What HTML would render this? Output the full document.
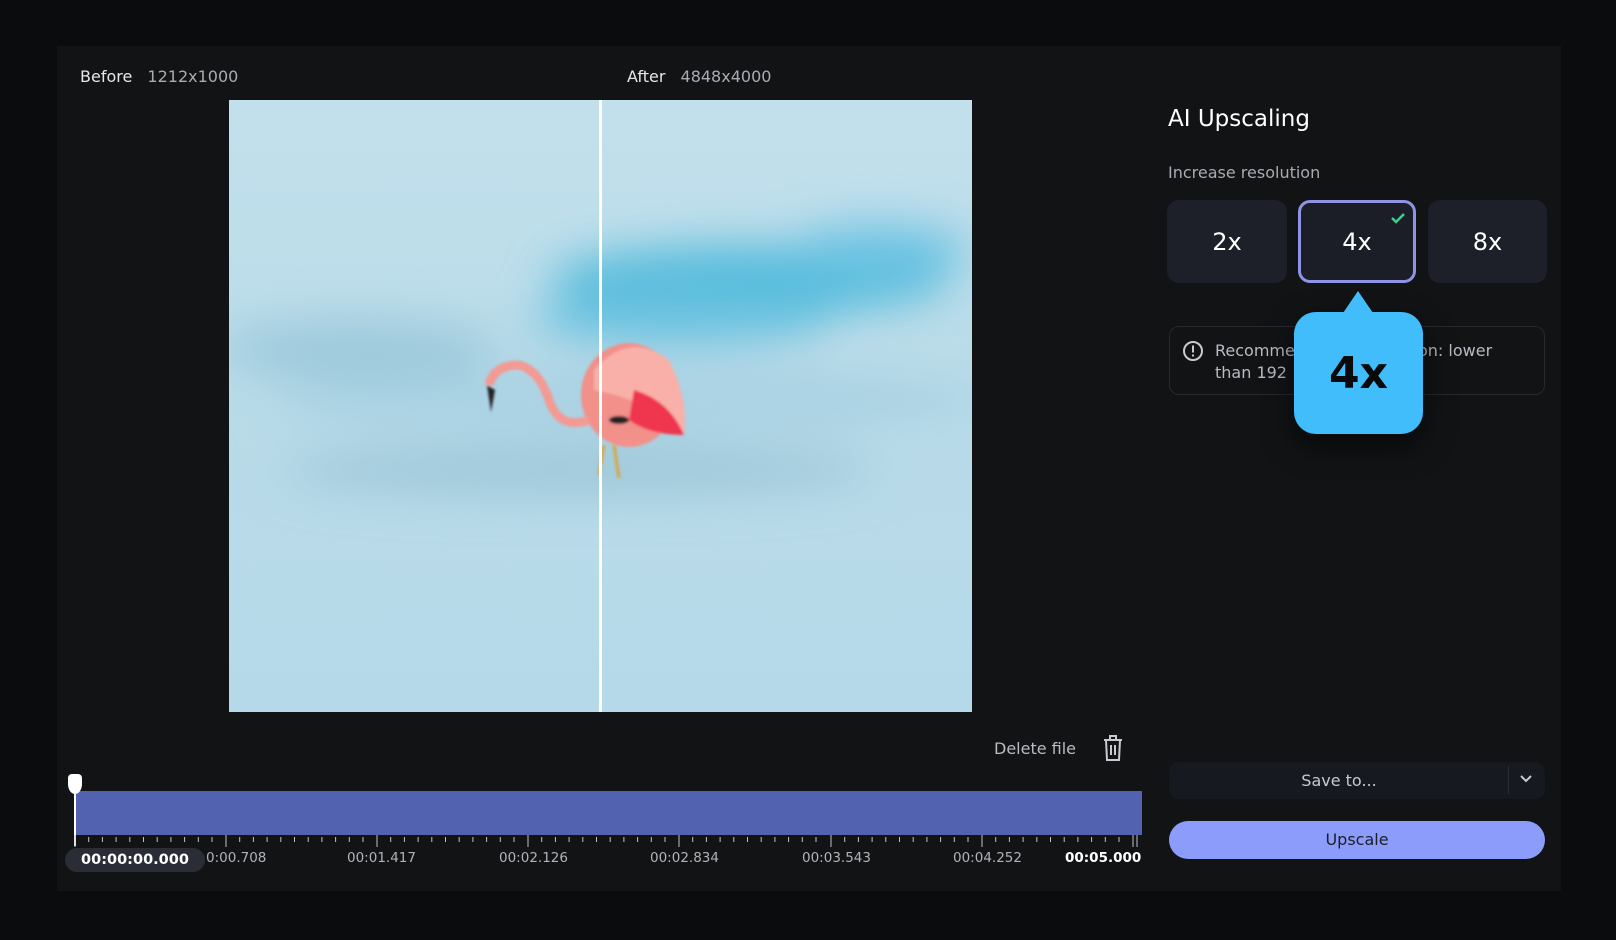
<!DOCTYPE html>
<html><head><meta charset="utf-8"><style>
*{margin:0;padding:0;box-sizing:border-box}
body{width:1616px;height:940px;background:#0b0c0e;font-family:"DejaVu Sans","Liberation Sans",sans-serif;position:relative;overflow:hidden;color:#d8dadf}
.panel{position:absolute;left:57px;top:46px;width:1504px;height:845px;background:#111315}
.a{position:absolute;white-space:nowrap}
.btn{position:absolute;top:200px;height:83px;width:120px;background:#1d2029;border-radius:12px;color:#fff;font-size:24px;display:flex;align-items:center;justify-content:center}
.lbl{position:absolute;top:850px;font-size:13.5px;color:#b0b3ba}
</style></head><body>
<div class="panel"></div>
<div class="a" style="left:80px;top:67px;font-size:16px;color:#e6e7ea">Before <span style="color:#a9acb3;margin-left:10px">1212x1000</span></div>
<div class="a" style="left:627px;top:67px;font-size:16px;color:#e6e7ea">After <span style="color:#a9acb3;margin-left:10px">4848x4000</span></div>

<svg class="a" style="left:229px;top:100px" width="743" height="612" viewBox="0 0 743 612">
<defs>
<filter id="b1" x="-50%" y="-50%" width="200%" height="200%"><feGaussianBlur stdDeviation="22"/></filter>
<filter id="b2"><feGaussianBlur stdDeviation="1.2"/></filter>
<linearGradient id="bg" x1="0" y1="0" x2="0" y2="1"><stop offset="0" stop-color="#c2e0ec"/><stop offset="0.5" stop-color="#b9dbe8"/><stop offset="1" stop-color="#b6d9ea"/></linearGradient>
</defs>
<rect width="743" height="612" fill="url(#bg)"/>
<g filter="url(#b1)">
<ellipse cx="520" cy="180" rx="200" ry="35" fill="#55bcdc"/>
<ellipse cx="450" cy="220" rx="150" ry="25" fill="#6ac2e0"/>
<ellipse cx="650" cy="150" rx="90" ry="25" fill="#6cc3e3" />
<ellipse cx="130" cy="250" rx="140" ry="30" fill="#9cc9dc"/>
<ellipse cx="400" cy="300" rx="360" ry="30" fill="#a9d2e3"/>
<ellipse cx="350" cy="370" rx="300" ry="25" fill="#9ec8d9"/>
</g>
<g filter="url(#b2)">
<ellipse cx="400" cy="295" rx="48" ry="52" fill="#f2908a"/>
<path d="M365 270 Q400 230 440 260 Q460 300 455 335 Q420 300 365 290Z" fill="#f8b0a8"/>
<path d="M405 290 Q440 300 455 335 Q420 335 400 320Z" fill="#f0344f"/>
<path d="M360 320 Q330 330 320 300 Q310 270 290 265 Q265 265 260 285" fill="none" stroke="#f39a94" stroke-width="9"/>
<path d="M258 285 L262 312 L266 290Z" fill="#222"/>
<path d="M375 345 L370 375 M385 345 L390 378" stroke="#d9a640" stroke-width="3"/>
<ellipse cx="390" cy="320" rx="10" ry="4" fill="#222"/>
</g>
<rect x="370" y="0" width="3" height="612" fill="#fff"/>
</svg>

<div class="a" style="left:1168px;top:106px;font-size:23px;color:#fff">AI Upscaling</div>
<div class="a" style="left:1168px;top:163px;font-size:16px;color:#a8abb3">Increase resolution</div>
<div class="btn" style="left:1167px">2x</div>
<div class="btn" style="left:1298px;width:118px;border:3px solid #8e93e6;background:#1b1e27">4x</div>
<svg class="a" style="left:1390px;top:212px" width="16" height="12"><path d="M2 6 L6 10 L14 2" stroke="#3ccf8e" stroke-width="2.5" fill="none"/></svg>
<div class="btn" style="left:1428px;width:119px">8x</div>

<div class="a" style="left:1169px;top:326px;width:376px;height:69px;border:1px solid #262930;border-radius:10px"></div>
<svg class="a" style="left:1182px;top:340px" width="22" height="22"><circle cx="11" cy="11" r="9" fill="none" stroke="#c8cad0" stroke-width="2"/><rect x="10" y="5.5" width="2" height="7" fill="#c8cad0"/><rect x="10" y="14.5" width="2" height="2" fill="#c8cad0"/></svg>
<div class="a" style="left:1215px;top:340px;font-size:16px;color:#b8bbc2;line-height:22px">Recomme<br>than 192</div>
<div class="a" style="left:1418px;top:340px;font-size:16px;color:#b8bbc2;line-height:22px">on: lower</div>

<div class="a" style="left:1294px;top:312px;width:129px;height:122px;background:#42bdfb;border-radius:22px;box-shadow:0 12px 30px rgba(0,0,0,.6);display:flex;align-items:center;justify-content:center;font-size:44px;font-weight:bold;color:#0a0a0a">4x</div>
<div class="a" style="left:1343px;top:291px;width:0;height:0;border-left:15px solid transparent;border-right:15px solid transparent;border-bottom:22px solid #42bdfb"></div>

<div class="a" style="left:994px;top:739px;font-size:16px;color:#b8bbc2">Delete file</div>
<svg class="a" style="left:1101px;top:733px" width="24" height="30"><path d="M3 7 H21 M9 7 V3 H15 V7 M5 7 L6 27 H18 L19 7 M10 12 V22 M14 12 V22" stroke="#c8cad0" stroke-width="2" fill="none"/></svg>

<div class="a" style="left:1169px;top:762px;width:376px;height:37px;background:#161920;border-radius:10px"></div>
<div class="a" style="left:1169px;top:771px;width:340px;text-align:center;font-size:16px;color:#c8cad0">Save to...</div>
<div class="a" style="left:1508px;top:766px;width:1px;height:28px;background:#2b2e36"></div>
<svg class="a" style="left:1519px;top:774px" width="14" height="10"><path d="M2 2 L7 7 L12 2" stroke="#c8cad0" stroke-width="2" fill="none"/></svg>
<div class="a" style="left:1169px;top:821px;width:376px;height:38px;background:#8c9cfa;border-radius:19px;text-align:center;line-height:38px;font-size:16px;color:#1a1d2a">Upscale</div>

<div class="a" style="left:74px;top:791px;width:1068px;height:44px;background:#5262b0"></div>
<div class="a" style="left:74px;top:776px;width:2px;height:70px;background:#fff"></div>
<div class="a" style="left:68px;top:774px;width:14px;height:20px;background:#fff;border-radius:4px 4px 50% 50%"></div>
<svg class="a" style="left:70px;top:835px" width="1080" height="12">
<g stroke="#c0c3ca" stroke-width="1">
<path d="M5 0 V12 M156 0 V12 M307 0 V12 M458 0 V12 M609 0 V12 M761 0 V12 M912 0 V12 M1063 0 V12 M1067 0 V12"/>
<g id="m"><path d="M18.7 2 V7 M32.4 2 V7 M46.1 2 V7 M59.8 2 V7 M73.5 2 V7 M87.2 2 V7 M100.9 2 V7 M114.6 2 V7 M128.3 2 V7 M142 2 V7"/></g>
<use href="#m" x="151"/><use href="#m" x="302"/><use href="#m" x="453"/><use href="#m" x="604"/><use href="#m" x="756"/><use href="#m" x="907"/>
</g></svg>
<div class="a" style="left:65px;top:848px;width:140px;height:24px;background:#2a2d36;border-radius:12px;text-align:center;line-height:24px;font-size:14.5px;font-weight:bold;color:#fff">00:00:00.000</div>
<div class="lbl" style="left:206px">0:00.708</div>
<div class="lbl" style="left:347px">00:01.417</div>
<div class="lbl" style="left:499px">00:02.126</div>
<div class="lbl" style="left:650px">00:02.834</div>
<div class="lbl" style="left:802px">00:03.543</div>
<div class="lbl" style="left:953px">00:04.252</div>
<div class="lbl" style="left:1065px;color:#fff;font-weight:bold">00:05.000</div>
</body></html>
